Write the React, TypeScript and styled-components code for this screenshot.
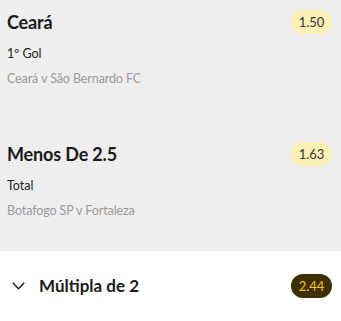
import styled, { createGlobalStyle } from "styled-components"

const GlobalStyle = createGlobalStyle`
  html, body {
    margin: 0;
    padding: 0;
    background: #ffffff;
  }
  body {
    font-family: Lato, "Noto Sans", sans-serif;
  }
`

const Page = styled.div`
  width: 341px;
  height: 321px;
  display: flex;
  flex-direction: column;
  overflow: hidden;
`

const SelectionList = styled.div`
  background: #eeeeee;
  display: flex;
  flex-direction: column;
  gap: 13px;
`

const Selection = styled.div`
  padding: 10px 9px 32px 7px;
  display: flex;
  flex-direction: column;
`

const Row = styled.div`
  display: flex;
  align-items: center;
  justify-content: space-between;
`

const Name = styled.div`
  font-size: 18px;
  line-height: 24px;
  font-weight: 700;
  color: #1a1a1a;
  letter-spacing: -0.15px;
`

const Market = styled.div`
  margin-top: 12px;
  font-size: 12.5px;
  line-height: 16px;
  color: #222222;
`

const Fixture = styled.div`
  margin-top: 9px;
  font-size: 12.5px;
  line-height: 16px;
  color: #9a9a9a;
  letter-spacing: -0.1px;
`

const Odds = styled.div<{ $dark?: boolean }>`
  min-width: 41px;
  height: 24px;
  box-sizing: border-box;
  padding: 0 6px;
  border-radius: 12px;
  display: flex;
  align-items: center;
  justify-content: center;
  font-size: 13px;
  background: ${p => (p.$dark ? "#3d2f00" : "#fdf0b5")};
  color: ${p => (p.$dark ? "#f5c518" : "#333333")};
`

const Footer = styled.div`
  flex: 1;
  background: #ffffff;
  padding: 23px 9px 0 12px;
`

const Toggle = styled.div`
  display: flex;
  align-items: center;
  gap: 14px;
`

const FooterTitle = styled.div`
  font-size: 17px;
  line-height: 24px;
  font-weight: 700;
  color: #1a1a1a;
`

const selections = [
  { name: "Ceará", market: "1º Gol", fixture: "Ceará v São Bernardo FC", odds: "1.50" },
  { name: "Menos De 2.5", market: "Total", fixture: "Botafogo SP v Fortaleza", odds: "1.63" },
]

export default function App() {
  return (
    <Page>
      <GlobalStyle />
      <SelectionList>
        {selections.map(s => (
          <Selection key={s.name}>
            <Row>
              <Name>{s.name}</Name>
              <Odds>{s.odds}</Odds>
            </Row>
            <Market>{s.market}</Market>
            <Fixture>{s.fixture}</Fixture>
          </Selection>
        ))}
      </SelectionList>
      <Footer>
        <Row>
          <Toggle>
            <svg width="13" height="8" viewBox="0 0 13 8" fill="none">
              <path d="M0.8 0.8 L6.5 6.8 L12.2 0.8" stroke="#1a1a1a" strokeWidth="1.4" />
            </svg>
            <FooterTitle>Múltipla de 2</FooterTitle>
          </Toggle>
          <Odds $dark>2.44</Odds>
        </Row>
      </Footer>
    </Page>
  )
}
